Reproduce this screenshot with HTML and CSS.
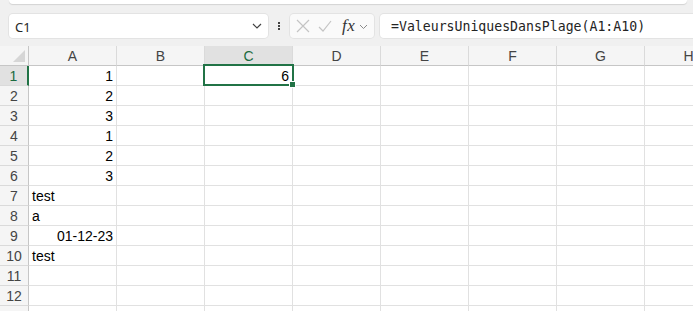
FILE: index.html
```html
<!DOCTYPE html>
<html>
<head>
<meta charset="utf-8">
<link rel="stylesheet" href="styles.css">
</head>
<body>
<div class="app">
  <div class="toolbar">
    <div class="topbox"></div>
    <div class="fbar">
      <div class="namebox">
        <span class="nameval">C1</span>
        <svg class="chev" width="10" height="6" viewBox="0 0 10 6"><path d="M1 1 L5 5 L9 1" fill="none" stroke="#424242" stroke-width="1.2"/></svg>
      </div>
      <div class="dots"><span></span><span></span><span></span></div>
      <div class="btnbox">
        <svg class="ico" width="14" height="14" viewBox="0 0 14 14"><path d="M1 1 L13 13 M13 1 L1 13" stroke="#c4c4c4" stroke-width="1.2" fill="none"/></svg>
        <svg class="ico" width="14" height="14" viewBox="0 0 14 14"><path d="M1 8 L5 12 L13 2" stroke="#c4c4c4" stroke-width="1.2" fill="none"/></svg>
        <span class="fx">fx</span>
        <svg class="chev2" width="9" height="6" viewBox="0 0 9 6"><path d="M1 1 L4.5 4.5 L8 1" fill="none" stroke="#8a8a8a" stroke-width="1"/></svg>
      </div>
      <div class="formula">=ValeursUniquesDansPlage(A1:A10)</div>
    </div>
  </div>
  <div class="sheet">
    <div class="ch corner"><span class="tri"></span></div>
    <div class="ch">A</div><div class="ch">B</div><div class="ch sel">C</div><div class="ch">D</div><div class="ch">E</div><div class="ch">F</div><div class="ch">G</div><div class="ch">H</div>

    <div class="rh sel">1</div><div class="c n">1</div><div class="c"></div><div class="c n active">6<span class="selbox"><span class="handle"></span></span></div><div class="c"></div><div class="c"></div><div class="c"></div><div class="c"></div><div class="c"></div>
    <div class="rh">2</div><div class="c n">2</div><div class="c"></div><div class="c"></div><div class="c"></div><div class="c"></div><div class="c"></div><div class="c"></div><div class="c"></div>
    <div class="rh">3</div><div class="c n">3</div><div class="c"></div><div class="c"></div><div class="c"></div><div class="c"></div><div class="c"></div><div class="c"></div><div class="c"></div>
    <div class="rh">4</div><div class="c n">1</div><div class="c"></div><div class="c"></div><div class="c"></div><div class="c"></div><div class="c"></div><div class="c"></div><div class="c"></div>
    <div class="rh">5</div><div class="c n">2</div><div class="c"></div><div class="c"></div><div class="c"></div><div class="c"></div><div class="c"></div><div class="c"></div><div class="c"></div>
    <div class="rh">6</div><div class="c n">3</div><div class="c"></div><div class="c"></div><div class="c"></div><div class="c"></div><div class="c"></div><div class="c"></div><div class="c"></div>
    <div class="rh">7</div><div class="c">test</div><div class="c"></div><div class="c"></div><div class="c"></div><div class="c"></div><div class="c"></div><div class="c"></div><div class="c"></div>
    <div class="rh">8</div><div class="c">a</div><div class="c"></div><div class="c"></div><div class="c"></div><div class="c"></div><div class="c"></div><div class="c"></div><div class="c"></div>
    <div class="rh">9</div><div class="c n">01-12-23</div><div class="c"></div><div class="c"></div><div class="c"></div><div class="c"></div><div class="c"></div><div class="c"></div><div class="c"></div>
    <div class="rh">10</div><div class="c">test</div><div class="c"></div><div class="c"></div><div class="c"></div><div class="c"></div><div class="c"></div><div class="c"></div><div class="c"></div>
    <div class="rh">11</div><div class="c"></div><div class="c"></div><div class="c"></div><div class="c"></div><div class="c"></div><div class="c"></div><div class="c"></div><div class="c"></div>
    <div class="rh">12</div><div class="c"></div><div class="c"></div><div class="c"></div><div class="c"></div><div class="c"></div><div class="c"></div><div class="c"></div><div class="c"></div>
    <div class="rh"></div><div class="c"></div><div class="c"></div><div class="c"></div><div class="c"></div><div class="c"></div><div class="c"></div><div class="c"></div><div class="c"></div>
  </div>
</div>
</body>
</html>
```
FILE: styles.css
```css
html, body {
  margin: 0;
  padding: 0;
  background: #ffffff;
  overflow: hidden;
}
.app {
  width: 693px;
  height: 311px;
  overflow: hidden;
}
.toolbar {
  background: #f0f0f0;
  height: 46px;
  box-sizing: border-box;
  display: flex;
  flex-direction: column;
}
.topbox {
  height: 4px;
  margin: 0 6px 0 9px;
  background: #ffffff;
  border-radius: 0 0 6px 6px;
  box-shadow: 0 1px 1px rgba(0,0,0,0.12);
}
.fbar {
  margin-top: 10px;
  height: 24px;
  display: flex;
  align-items: stretch;
  padding-left: 9px;
}
.namebox {
  width: 259px;
  box-sizing: border-box;
  background: #fff;
  border-radius: 4px;
  box-shadow: 0 0 0 1px #e3e3e3;
  display: flex;
  align-items: center;
  justify-content: space-between;
  padding: 0 6px 0 6px;
  font-family: "Noto Sans", "Open Sans", sans-serif;
  font-size: 13px;
  color: #242424;
}
.nameval { margin-top: 1px; }
.dots {
  width: 22px;
  display: flex;
  flex-direction: column;
  align-items: center;
  justify-content: center;
  gap: 1px;
}
.dots span {
  width: 2px;
  height: 2px;
  background: #424242;
  display: block;
}
.btnbox {
  width: 84px;
  box-sizing: border-box;
  background: #fafafa;
  border-radius: 4px;
  box-shadow: 0 0 0 1px #e3e3e3;
  display: flex;
  align-items: center;
  padding-left: 6px;
}
.ico { margin-right: 8px; }
.fx {
  font-family: "Liberation Serif", serif;
  font-style: italic;
  font-size: 17px;
  color: #333;
  margin-left: 2px;
  margin-right: 4px;
  letter-spacing: 0.5px;
}
.chev2 { margin-top: 1px; }
.formula {
  margin-left: 6px;
  flex: 1;
  margin-right: -20px;
  background: #fff;
  border-radius: 4px;
  box-shadow: 0 0 0 1px #e3e3e3;
  font-family: "DejaVu Sans Mono", "Liberation Mono", monospace;
  font-size: 13.2px;
  color: #242424;
  display: flex;
  align-items: center;
  padding-left: 11px;
}
.sheet {
  display: grid;
  grid-template-columns: 29px repeat(8, 88px);
  grid-auto-rows: 20px;
  font-family: "Liberation Sans", Arial, sans-serif;
}
.ch, .rh, .c {
  box-sizing: border-box;
  font-size: 14px;
  line-height: 21px;
  white-space: nowrap;
}
.ch {
  background: #f5f5f5;
  border-bottom: 1px solid #c6c6c6;
  border-right: 1px solid #dadada;
  text-align: center;
  color: #444444;
}
.ch.sel {
  background: #e1e1e1;
  border-bottom: 2px solid #217346;
  color: #1b6b3f;
}
.corner {
  position: relative;
  border-right: 1px solid #c6c6c6;
}
.tri {
  position: absolute;
  right: 3px;
  bottom: 3px;
  width: 0;
  height: 0;
  border-left: 12px solid transparent;
  border-bottom: 12px solid #d6d6d6;
}
.rh {
  background: #f5f5f5;
  border-right: 1px solid #c6c6c6;
  border-bottom: 1px solid #dadada;
  text-align: center;
  color: #444444;
}
.rh.sel {
  background: #e1e1e1;
  border-right: 2px solid #217346;
  color: #1b6b3f;
}
.c {
  border-right: 1px solid #e1e1e1;
  border-bottom: 1px solid #e1e1e1;
  padding: 0 3px;
  color: #000;
}
.c.n { text-align: right; }
.c.active { position: relative; }
.selbox {
  position: absolute;
  left: -2px;
  top: -2px;
  width: 91px;
  height: 22px;
  box-sizing: border-box;
  border: 2px solid #217346;
}
.handle {
  position: absolute;
  right: -4px;
  bottom: -4px;
  width: 5px;
  height: 5px;
  background: #217346;
  border: 1px solid #fff;
}
```
